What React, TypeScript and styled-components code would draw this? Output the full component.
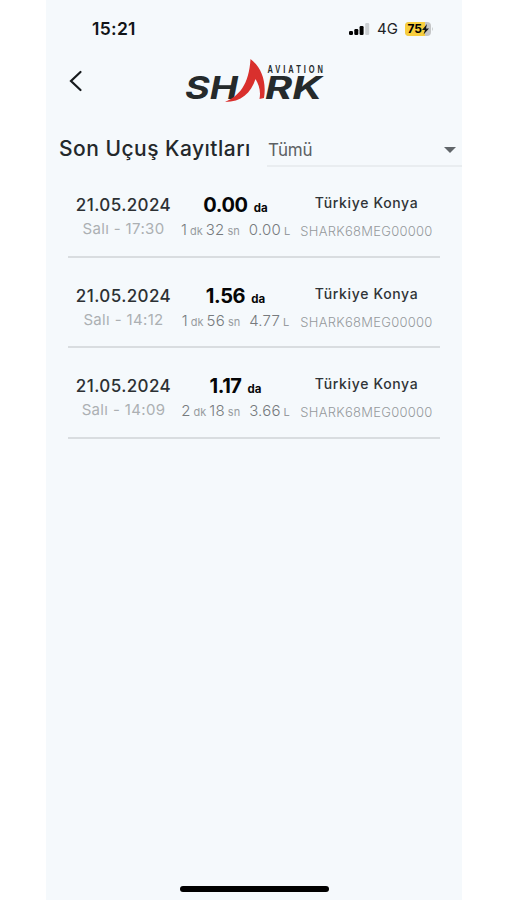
import React from "react";
import styled, { createGlobalStyle } from "styled-components";

const GlobalStyle = createGlobalStyle`
  * { box-sizing: border-box; }
  body { margin: 0; background: #fff; font-family: Inter, sans-serif; }
`;

const Screen = styled.main`
  width: 416px;
  height: 900px;
  margin-left: 46px;
  background: #f5f9fc;
  display: flex;
  flex-direction: column;
  overflow: hidden;
`;

const StatusBar = styled.div`
  height: 57px;
  padding: 0 28px 0 46px;
  display: flex;
  align-items: center;
  justify-content: space-between;
`;

const Clock = styled.span`
  font-size: 17.5px;
  font-weight: 600;
  color: #111417;
  letter-spacing: 0.3px;
`;

const Indicators = styled.div`
  display: flex;
  align-items: center;
  color: #202326;
`;

const Network = styled.span`
  font-size: 15px;
  letter-spacing: 0.1px;
  margin: 0 7px 0 7px;
`;

const Header = styled.header`
  height: 66px;
  display: flex;
  padding-left: 22px;
`;

const BackButton = styled.button`
  width: 16px;
  height: 24px;
  margin-top: 12px;
  padding: 0;
  border: 0;
  background: none;
`;

const Logo = styled.svg`
  margin-left: 98px;
  display: block;
`;

const FilterBar = styled.section`
  height: 44px;
  padding-left: 13px;
  display: flex;
`;

const Title = styled.h1`
  margin: 12px 0 0;
  width: 208px;
  font-size: 21px;
  line-height: 28px;
  font-weight: 500;
  letter-spacing: 0.48px;
  color: #24282b;
  white-space: nowrap;
`;

const Select = styled.div`
  flex: 1;
  height: 44px;
  padding: 11px 6px 0 1px;
  display: flex;
  align-items: center;
  justify-content: space-between;
  border-bottom: 2px solid #e9edf0;
  font-size: 17px;
  color: #5d6164;
  letter-spacing: -0.2px;
`;

const List = styled.ul`
  list-style: none;
  margin: 0;
  padding: 0 22px;
`;

const Row = styled.li`
  height: 90.5px;
  padding-top: 24px;
  display: grid;
  grid-template-columns: 111px 113px 149px;
  border-bottom: 2px solid #d9dde0;
  white-space: nowrap;
`;

const Cell = styled.div`
  display: flex;
  flex-direction: column;
  align-items: center;
`;

const FlightDate = styled.span`
  margin-top: 2px;
  font-size: 17px;
  line-height: 24px;
  font-weight: 500;
  letter-spacing: 0.4px;
  color: #2d3134;
`;

const FlightTime = styled.span`
  font-size: 15px;
  line-height: 23px;
  letter-spacing: 0.35px;
  color: #acb0b3;
`;

const Area = styled.span`
  margin-top: 2px;
  font-size: 20px;
  line-height: 24px;
  font-weight: 700;
  color: #050607;
  letter-spacing: -0.4px;
`;

const AreaUnit = styled.small`
  margin-left: 6px;
  font-size: 11.5px;
  font-weight: 700;
  letter-spacing: 0;
`;

const Usage = styled.span`
  display: flex;
  align-items: baseline;
  gap: 3px;
  height: 20px;
  line-height: 18px;
  color: #777b7e;
`;

const Amount = styled.span<{ $gap?: boolean }>`
  font-size: 15px;
  line-height: 20px;
  font-weight: 300;
  letter-spacing: 0.2px;
  margin-left: ${(p) => (p.$gap ? 6 : 0)}px;
`;

const Unit = styled.small`
  font-size: 11px;
  color: #989ca0;
`;

const Place = styled.span`
  font-size: 14px;
  line-height: 24px;
  font-weight: 500;
  letter-spacing: 0.65px;
  color: #303437;
`;

const Serial = styled.span`
  margin-top: 4px;
  font-size: 13px;
  line-height: 24px;
  font-weight: 300;
  letter-spacing: 0.27px;
  color: #95999c;
`;

const HomeIndicator = styled.div`
  width: 149px;
  height: 6px;
  margin: auto auto 8px;
  border-radius: 3px;
  background: #000;
`;

const flights = [
  { time: "17:30", area: "0.00", min: 1, sec: 32, litres: "0.00" },
  { time: "14:12", area: "1.56", min: 1, sec: 56, litres: "4.77" },
  { time: "14:09", area: "1.17", min: 2, sec: 18, litres: "3.66" },
];

function SharkLogo() {
  return (
    <Logo width="144" height="48" viewBox="0 0 144 48" aria-label="Shark Aviation">
      <g fill="#252a2b" fontFamily="Inter, sans-serif">
        <text x="3" y="41.5" fontSize="31" fontWeight="700" fontStyle="italic" textLength="53" lengthAdjust="spacingAndGlyphs">SH</text>
        <text x="83" y="41.5" fontSize="31" fontWeight="700" fontStyle="italic" textLength="57" lengthAdjust="spacingAndGlyphs">RK</text>
        <text x="85" y="16" fontFamily="Liberation Sans, sans-serif" fontSize="10" fontWeight="700" transform="translate(21.75 0) scale(.75 1)" textLength="74" lengthAdjust="spacing">AVIATION</text>
      </g>
      <path d="M68.5 2C78 9 85 23 82 41L77.5 42C79 34 77 28 73.5 22C69 36 59 45 43 45C57 39 67 28 68.5 2Z" fill="#d9302d" />
    </Logo>
  );
}

export default function App() {
  return (
    <>
      <GlobalStyle />
      <Screen>
        <StatusBar>
          <Clock>15:21</Clock>
          <Indicators>
            <svg width="21" height="14" viewBox="0 0 21 14">
              <rect x="0" y="9" width="4" height="4" rx="1.2" />
              <rect x="5.3" y="7" width="4" height="6" rx="1.2" />
              <rect x="10.6" y="4" width="4" height="9" rx="1.2" />
              <rect x="16.2" y="1" width="4" height="12" rx="1.2" fill="#ccd0d3" />
            </svg>
            <Network>4G</Network>
            <svg width="29" height="14" viewBox="0 0 29 14">
              <rect width="26" height="14" rx="4" fill="#c4c6c7" />
              <path d="M4 0H20V14H4Q0 14 0 10V4Q0 0 4 0" fill="#f8ce3e" />
              <text x="2.5" y="11.4" fontFamily="Inter, sans-serif" fontSize="12" fontWeight="700" textLength="14.5">75</text>
              <path d="M22 2L17 8H20L18.5 12.5L24 6.5H21Z" fill="#141618" />
              <path d="M27 5Q29 7 27 9Z" fill="#cbced0" />
            </svg>
          </Indicators>
        </StatusBar>
        <Header>
          <BackButton aria-label="Geri">
            <svg width="16" height="24" viewBox="0 0 16 24" fill="none" stroke="#161a1d" strokeWidth="2.2" strokeLinecap="round">
              <path d="M12.5 3L3 12L12.5 21" />
            </svg>
          </BackButton>
          <SharkLogo />
        </Header>
        <FilterBar>
          <Title>Son Uçuş Kayıtları</Title>
          <Select>
            Tümü
            <svg width="12" height="6" viewBox="0 0 12 6"><path d="M0 0H12L6 6Z" fill="#61666a" /></svg>
          </Select>
        </FilterBar>
        <List>
          {flights.map((f) => (
            <Row key={f.time}>
              <Cell>
                <FlightDate>21.05.2024</FlightDate>
                <FlightTime>Salı - {f.time}</FlightTime>
              </Cell>
              <Cell>
                <Area>{f.area}<AreaUnit>da</AreaUnit></Area>
                <Usage>
                  <Amount>{f.min}</Amount><Unit>dk</Unit>
                  <Amount>{f.sec}</Amount><Unit>sn</Unit>
                  <Amount $gap>{f.litres}</Amount><Unit>L</Unit>
                </Usage>
              </Cell>
              <Cell>
                <Place>Türkiye Konya</Place>
                <Serial>SHARK68MEG00000</Serial>
              </Cell>
            </Row>
          ))}
        </List>
        <HomeIndicator />
      </Screen>
    </>
  );
}
